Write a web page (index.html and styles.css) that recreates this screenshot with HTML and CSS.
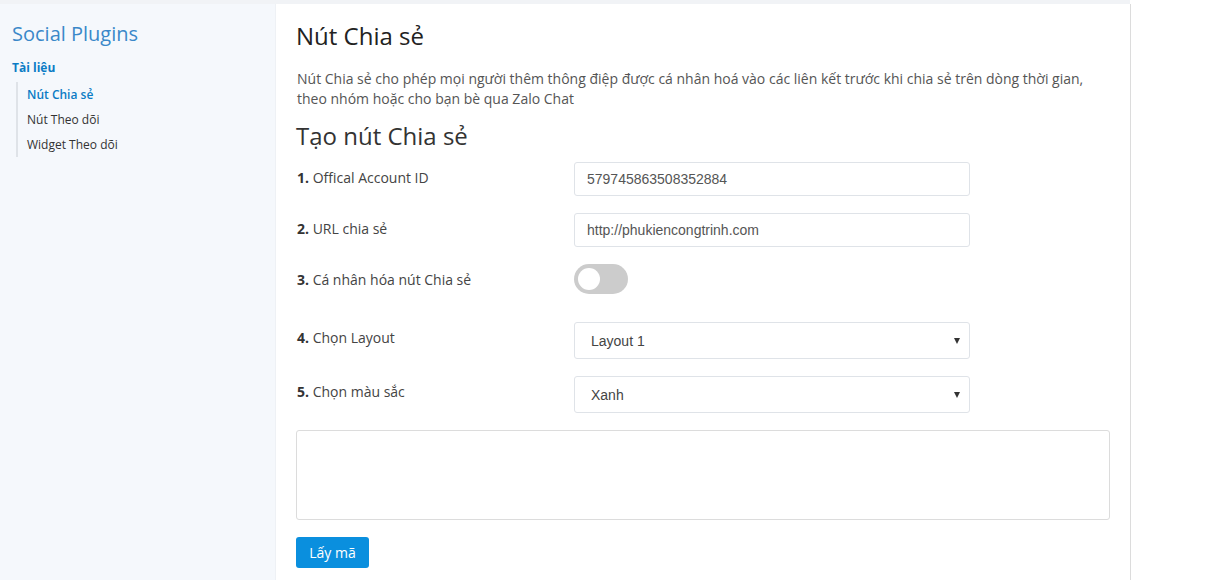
FILE: index.html
```html
<!DOCTYPE html>
<html lang="vi">
<head>
<meta charset="utf-8">
<title>Nút Chia sẻ - Social Plugins</title>
<link rel="stylesheet" href="styles.css">
</head>
<body>
<div class="page">
  <div class="topbar"></div>
  <div class="layout">
    <aside class="sidebar">
      <div class="brand">Social Plugins</div>
      <div class="section">Tài liệu</div>
      <ul class="menu">
        <li class="active">Nút Chia sẻ</li>
        <li>Nút Theo dõi</li>
        <li>Widget Theo dõi</li>
      </ul>
    </aside>
    <main class="content">
      <h1 class="title">Nút Chia sẻ</h1>
      <p class="desc">Nút Chia sẻ cho phép mọi người thêm thông điệp được cá nhân hoá vào các liên kết trước khi chia sẻ trên dòng thời gian, theo nhóm hoặc cho bạn bè qua Zalo Chat</p>
      <h2 class="subtitle">Tạo nút Chia sẻ</h2>
      <div class="form">
        <div class="row">
          <label class="label"><b>1.</b> Offical Account ID</label>
          <input class="field" type="text" value="579745863508352884">
        </div>
        <div class="row">
          <label class="label"><b>2.</b> URL chia sẻ</label>
          <input class="field" type="text" value="http://phukiencongtrinh.com">
        </div>
        <div class="row row-toggle">
          <label class="label"><b>3.</b> Cá nhân hóa nút Chia sẻ</label>
          <span class="toggle"><span class="knob"></span></span>
        </div>
        <div class="row row-select">
          <label class="label"><b>4.</b> Chọn Layout</label>
          <div class="select"><span>Layout 1</span><span class="caret"></span></div>
        </div>
        <div class="row row-select">
          <label class="label"><b>5.</b> Chọn màu sắc</label>
          <div class="select"><span>Xanh</span><span class="caret"></span></div>
        </div>
        <textarea class="code"></textarea>
        <div class="actions"><button class="btn">Lấy mã</button></div>
      </div>
    </main>
    <div class="rightpad"></div>
  </div>
</div>
</body>
</html>
```
FILE: styles.css
```css
* { box-sizing: border-box; }
html, body { margin: 0; padding: 0; }
body {
  background: #ffffff;
  font-family: "Open Sans", "Liberation Sans", sans-serif;
  color: #444;
  width: 1227px;
  height: 580px;
  overflow: hidden;
}
.page { width: 1227px; }
.topbar {
  width: 1130px;
  height: 4px;
  background: #f1f3f6;
}
.layout {
  display: flex;
  height: 576px;
}
.sidebar {
  width: 276px;
  flex: none;
  background: #f5f8fc;
  border-right: 1px solid #eef1f5;
  padding: 17px 0 0 12px;
}
.brand {
  font-size: 20px;
  line-height: 26px;
  color: #3a88c9;
}
.section {
  margin-top: 13px;
  font-size: 12px;
  line-height: 16px;
  font-weight: 700;
  color: #0b7cc5;
}
.menu {
  list-style: none;
  margin: 6px 0 0 4px;
  padding: 0 0 0 9px;
  border-left: 2px solid #dfe3e8;
}
.menu li {
  font-size: 12px;
  line-height: 25px;
  color: #333;
}
.menu li.active {
  color: #0b7cc5;
  font-weight: 600;
}
.content {
  width: 855px;
  flex: none;
  border-right: 1px solid #dcdcdc;
  padding: 14px 20px 0 20px;
}
.rightpad { flex: 1; }
.title {
  margin: 0;
  font-size: 24px;
  line-height: 36px;
  font-weight: 400;
  color: #222;
}
.desc {
  margin: 15px 0 0 1px;
  font-size: 14px;
  line-height: 20px;
  color: #555;
}
.subtitle {
  margin: 10px 0 0 0;
  font-size: 24px;
  line-height: 34px;
  font-weight: 400;
  color: #333;
}
.form { margin-top: 9px; padding-left: 1px; }
.row {
  display: grid;
  grid-template-columns: 277px 396px;
  align-items: start;
  margin-bottom: 17px;
}
.label {
  font-size: 14px;
  line-height: 20px;
  padding-top: 6px;
  color: #444;
}
.label b { font-weight: 700; color: #333; }
.field {
  height: 34px;
  border: 1px solid #dfe3e8;
  border-radius: 3px;
  padding: 0 12px;
  font-family: "Liberation Sans", Arial, sans-serif;
  font-size: 14px;
  color: #555;
  background: #fff;
  outline: none;
}
.row-toggle { margin-bottom: 28px; }
.toggle {
  display: block;
  width: 54px;
  height: 30px;
  border-radius: 15px;
  background: #cccccc;
  padding: 4px;
}
.knob {
  display: block;
  width: 22px;
  height: 22px;
  border-radius: 50%;
  background: #fff;
}
.row-select .label { padding-top: 6px; }
.select {
  height: 37px;
  border: 1px solid #dfe3e8;
  border-radius: 3px;
  display: flex;
  align-items: center;
  justify-content: space-between;
  padding: 0 9px 0 16px;
  font-family: "Liberation Sans", Arial, sans-serif;
  font-size: 14px;
  color: #444;
  background: #fff;
}
.caret {
  width: 0;
  height: 0;
  border-left: 3.5px solid transparent;
  border-right: 3.5px solid transparent;
  border-top: 6px solid #333;
}
.code {
  display: block;
  width: 814px;
  height: 90px;
  margin: 0 0 17px -1px;
  border: 1px solid #dcdcdc;
  border-radius: 3px;
  resize: none;
  background: #fff;
}
.actions { margin-left: -1px; }
.btn {
  height: 31px;
  width: 73px;
  border: none;
  border-radius: 3px;
  background: #0a8fde;
  color: #fff;
  font-family: "Open Sans", "Liberation Sans", sans-serif;
  font-size: 14px;
  padding: 0;
}
```
